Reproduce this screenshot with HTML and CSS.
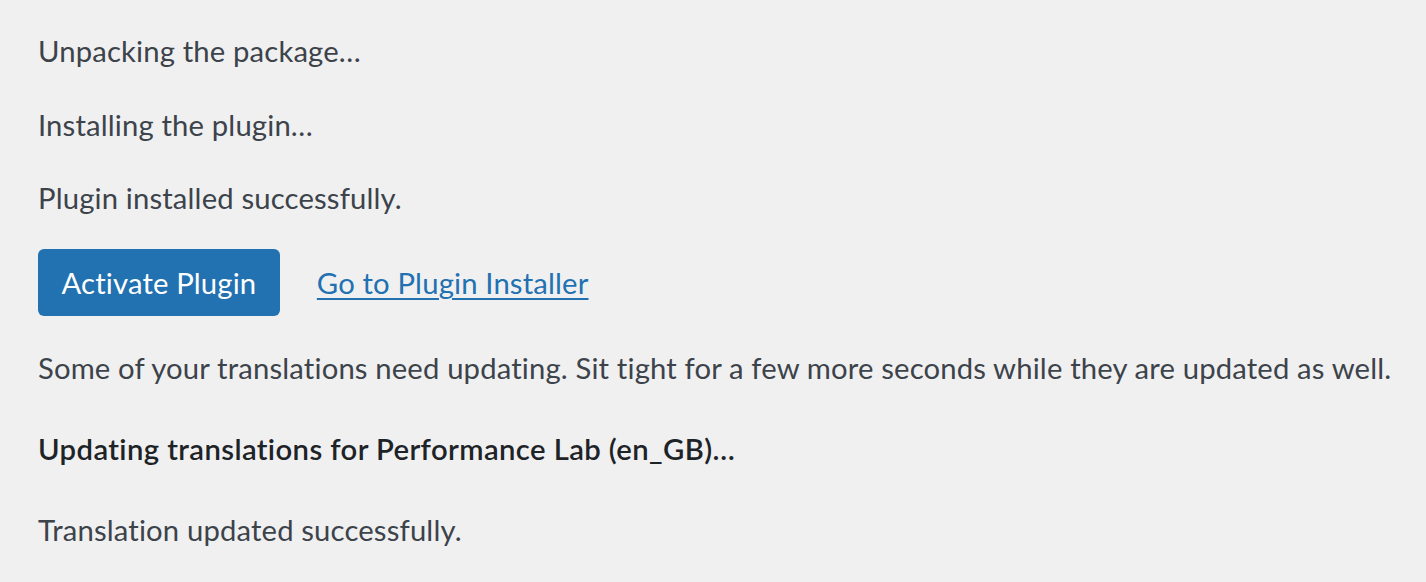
FILE: index.html
```html
<!DOCTYPE html>
<html lang="en">
<head>
<meta charset="utf-8">
<title>Installing Plugin</title>
<link rel="stylesheet" href="styles.css">
</head>
<body>
<div class="wrap">
  <p>Unpacking the package…</p>
  <p>Installing the plugin…</p>
  <p>Plugin installed successfully.</p>
  <p class="actions">
    <a class="button-primary" href="#">Activate Plugin</a>
    <a class="link" href="#">Go to Plugin Installer</a>
  </p>
  <p>Some of your translations need updating. Sit tight for a few more seconds while they are updated as well.</p>
  <h2 class="lang-heading">Updating translations for Performance Lab (en_GB)…</h2>
  <p>Translation updated successfully.</p>
</div>
</body>
</html>
```
FILE: styles.css
```css
html, body {
  margin: 0;
  padding: 0;
  background: #f0f0f1;
}
body {
  font-family: "Lato", "Roboto", sans-serif;
  font-size: 29.25px;
  line-height: 1.5;
  color: #3c434a;
  letter-spacing: 0.15px;
}
.wrap {
  padding: 0 0 0 38px;
  overflow: hidden;
}
.wrap p {
  margin: 29.4px 0;
  white-space: nowrap;
}
.actions {
  display: flex;
  align-items: center;
  gap: 37px;
}
.button-primary {
  display: inline-flex;
  align-items: center;
  height: 67px;
  line-height: 67px;
  padding: 0 23.5px;
  background: #2271b1;
  color: #fff;
  border-radius: 6px;
  text-decoration: none;
  box-sizing: border-box;
}
.link {
  color: #2271b1;
  text-decoration: underline;
  text-underline-offset: 4px;
  text-decoration-thickness: 2px;
}
.lang-heading {
  margin: 37.5px 0;
  font-size: 29.25px;
  line-height: 1.5;
  font-weight: 600;
  color: #1d2327;
  letter-spacing: 0.4px;
  white-space: nowrap;
}
```
